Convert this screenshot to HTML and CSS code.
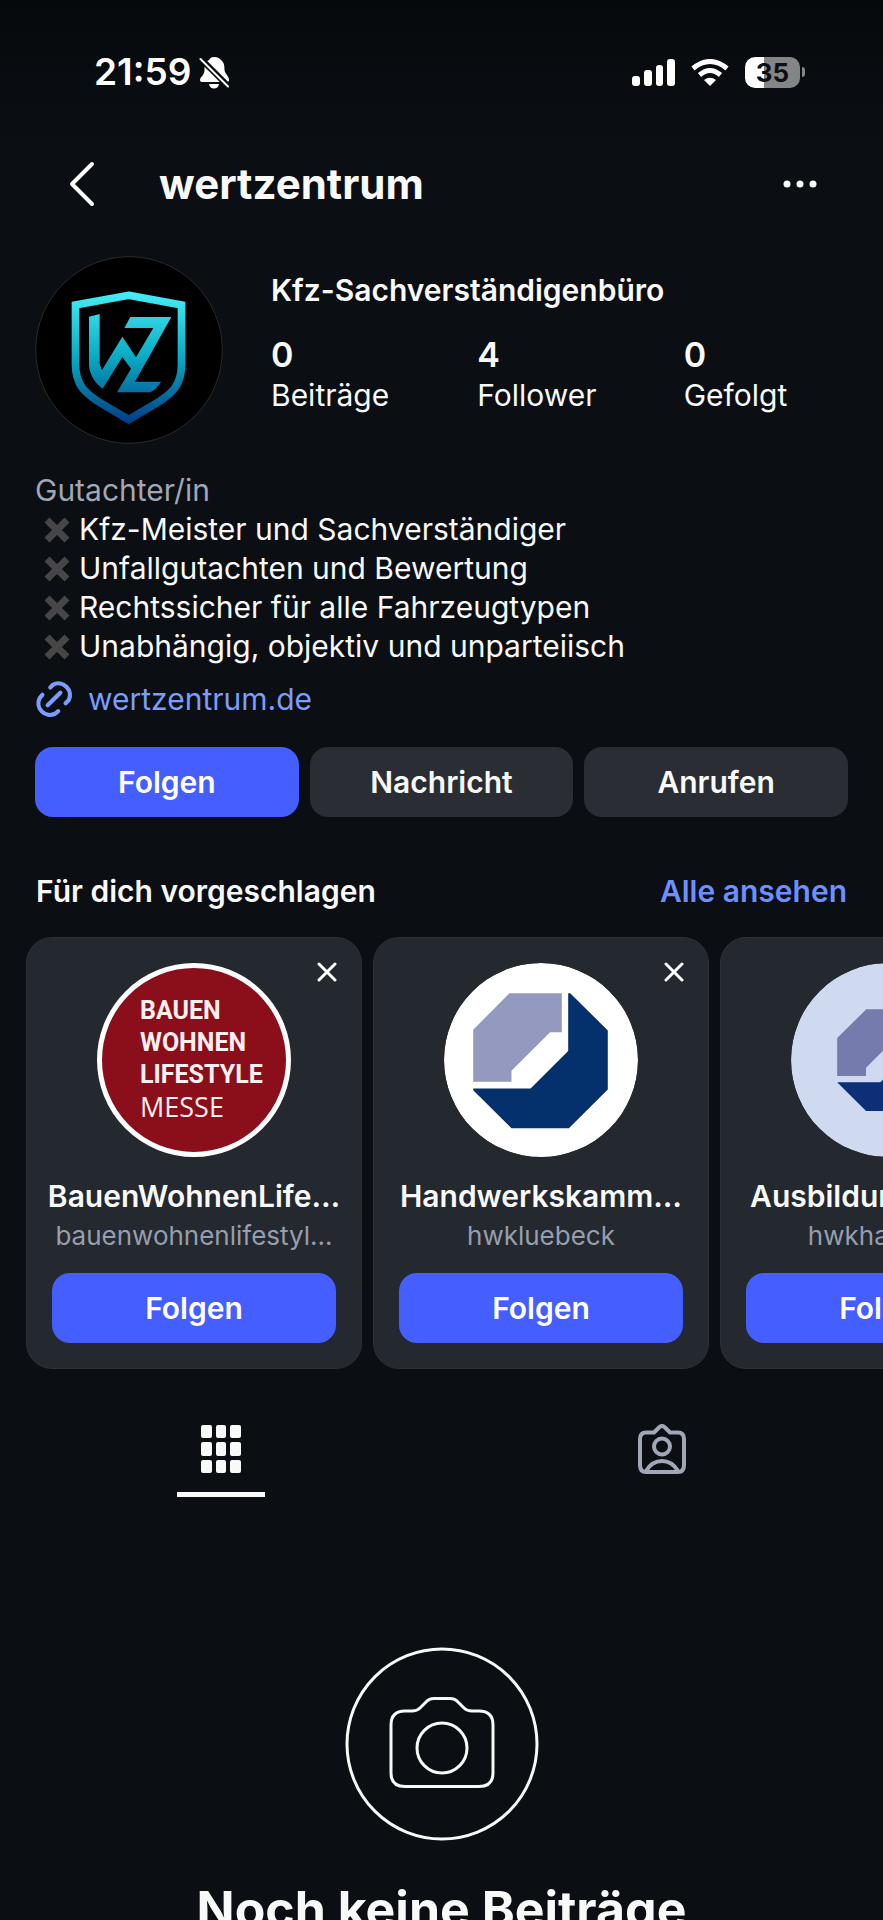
FILE: index.html
```html
<!DOCTYPE html>
<html lang="de">
<head>
  <meta charset="UTF-8">
  <meta name="viewport" content="width=device-width, initial-scale=1.0">
  <title>wertzentrum</title>
  <link rel="stylesheet" href="styles.css">
</head>
<body>
  <div class="app">
    <div class="status-bar">
      <div class="status-left">
        <span class="time">21:59</span>
        <svg class="bell" viewBox="0 0 30 33" width="30" height="33">
          <path d="M15 1C19 1 21 2.500 22 4C25 6.500 25.500 9 25.500 14C26 18 30 20 30 24C30 25.500 29 26 28 26H3C1 26 .500 24 1.500 22C4 19 5.500 18 5.500 13C5.500 8 7 5.500 10 4C11 2 12.500 1 15 1Z" fill="#fff"/>
          <path d="M10 28H20C19.500 31 17.500 32.500 15 32.500C12.500 32.500 10.500 31 10 28Z" fill="#fff"/>
          <path d="M0 1L30 31" stroke="#080b0f" stroke-width="6"/>
          <path d="M1.500 3L29 30.500" stroke="#fff" stroke-width="2" stroke-linecap="round"/>
        </svg>
      </div>
      <div class="status-right">
        <svg viewBox="0 0 43 27" width="43" height="27" fill="#fff">
          <rect x="0" y="17" width="8" height="10" rx="3"/>
          <rect x="12" y="11" width="8" height="16" rx="3"/>
          <rect x="24" y="6" width="7" height="21" rx="3"/>
          <rect x="35" y="0" width="8" height="27" rx="3"/>
        </svg>
        <svg viewBox="0 0 38 27" width="38" height="27" fill="none" stroke="#fff" stroke-width="5">
          <path d="M2 9.500Q19 -4.500 36 9.500"/>
          <path d="M8.500 16Q19 7 29.500 16"/>
          <path d="M19 27L13 21Q19 16.500 25 21Z" fill="#fff" stroke="none"/>
        </svg>
        <div class="battery"><span class="battery-level">35</span><span class="battery-tip"></span></div>
      </div>
    </div>

    <header class="header">
      <button class="icon-btn" aria-label="Zurück">
        <svg viewBox="0 0 26 46" width="26" height="46" fill="none" stroke="#f8f9f9" stroke-width="4" stroke-linecap="round" stroke-linejoin="round"><path d="M23 3L3 23L23 43"/></svg>
      </button>
      <h1>wertzentrum</h1>
      <button class="icon-btn" aria-label="Mehr">
        <svg viewBox="0 0 34 8" width="34" height="8" fill="#f8f9f9"><circle cx="4" cy="4" r="3.500"/><circle cx="17" cy="4" r="3.500"/><circle cx="30" cy="4" r="3.500"/></svg>
      </button>
    </header>

    <main>
      <section class="profile">
        <svg class="avatar" viewBox="0 0 564 564">
          <defs>
            <linearGradient id="wz" gradientUnits="userSpaceOnUse" x1="0" y1="106" x2="0" y2="504">
              <stop offset="0" stop-color="#46eef5"/>
              <stop offset=".5" stop-color="#0aa9c2"/>
              <stop offset="1" stop-color="#013b84"/>
            </linearGradient>
          </defs>
          <circle cx="282" cy="282" r="280" fill="#000" stroke="#2a2a2b" stroke-width="3"/>
          <path d="M281 118L439.500 147V325C439.500 390 408 412 375 435L281 491L187 435C154 412 121.500 390 121.500 325V147Z" fill="none" stroke="url(#wz)" stroke-width="23"/>
          <path d="M162 182L194 174V325L201 342L262 242L303 304L355 216H268L286 183H409L300 377H378Q362 403 345 409H246L288 338L262 303L203 398C175 378 162 350 162 325Z" fill="url(#wz)"/>
        </svg>
        <div class="info">
          <h2>Kfz-Sachverständigenbüro</h2>
          <div class="stats">
            <div><b>0</b><span>Beiträge</span></div>
            <div><b>4</b><span>Follower</span></div>
            <div><b>0</b><span>Gefolgt</span></div>
          </div>
        </div>
      </section>

      <section class="bio">
        <p class="category">Gutachter/in</p>
        <ul>
          <li><svg class="cross" viewBox="0 0 26 26"><path d="M3 3L23 23M23 3L3 23"/></svg>Kfz-Meister und Sachverständiger</li>
          <li><svg class="cross" viewBox="0 0 26 26"><path d="M3 3L23 23M23 3L3 23"/></svg>Unfallgutachten und Bewertung</li>
          <li><svg class="cross" viewBox="0 0 26 26"><path d="M3 3L23 23M23 3L3 23"/></svg>Rechtssicher für alle Fahrzeugtypen</li>
          <li><svg class="cross" viewBox="0 0 26 26"><path d="M3 3L23 23M23 3L3 23"/></svg>Unabhängig, objektiv und unparteiisch</li>
        </ul>
        <a class="website" href="#">
          <svg viewBox="1 1 36 36" width="38" height="38" fill="none" stroke="#7a9dff" stroke-width="4" stroke-linecap="round">
            <path d="M13 25L25 13"/>
            <path d="M15.500 8L18 5.500A11 11 0 0 1 33 20L30 23"/>
            <path d="M8 15L5.500 18A11 11 0 0 0 20 33L23 30.500"/>
          </svg>
          wertzentrum.de
        </a>
      </section>

      <div class="actions">
        <button class="btn primary">Folgen</button>
        <button class="btn">Nachricht</button>
        <button class="btn">Anrufen</button>
      </div>

      <div class="suggest-head">
        <h3>Für dich vorgeschlagen</h3>
        <a href="#">Alle ansehen</a>
      </div>

      <div class="cards">
        <article class="card">
          <button class="close" aria-label="Schließen"><svg viewBox="0 0 20 20" width="20" height="20"><path d="M2 2L18 18M18 2L2 18"/></svg></button>
          <div class="logo messe">
            <strong>BAUEN</strong>
            <strong>WOHNEN</strong>
            <strong>LIFESTYLE</strong>
            <span>MESSE</span>
          </div>
          <h4>BauenWohnenLife…</h4>
          <p>bauenwohnenlifestyl…</p>
          <button class="btn primary">Folgen</button>
        </article>
        <article class="card">
          <button class="close" aria-label="Schließen"><svg viewBox="0 0 20 20" width="20" height="20"><path d="M2 2L18 18M18 2L2 18"/></svg></button>
          <svg class="logo" viewBox="0 0 578 578">
            <circle cx="289" cy="289" r="289" fill="#fff"/>
            <path d="M195 90H351V206H316L201 321V354H87V199Z" fill="#9399bf"/>
            <path d="M370 90H376L488 201V377L372 492H201L87 379V374H258L370 262Z" fill="#04316b"/>
          </svg>
          <h4>Handwerkskamm…</h4>
          <p>hwkluebeck</p>
          <button class="btn primary">Folgen</button>
        </article>
        <article class="card">
          <button class="close" aria-label="Schließen"><svg viewBox="0 0 20 20" width="20" height="20"><path d="M2 2L18 18M18 2L2 18"/></svg></button>
          <svg class="logo" viewBox="0 0 578 578">
            <circle cx="289" cy="289" r="289" fill="#cfd9ef"/>
            <g transform="translate(72 70) scale(.754)">
              <path d="M202 90H351V206H316L201 321V354H87V204Z" fill="#757cad"/>
              <path d="M370 90L488 201V377L372 492H201L87 378H258L370 262Z" fill="#0c2f78"/>
            </g>
          </svg>
          <h4>Ausbildungsbera…</h4>
          <p>hwkhamburg</p>
          <button class="btn primary">Folgen</button>
        </article>
      </div>

      <nav class="tabs">
        <a class="tab active" href="#" aria-label="Beiträge">
          <svg viewBox="0 0 42 50" width="42" height="50" fill="#f8f9f9">
            <rect x="1" y="1" width="11" height="13" rx="2"/><rect x="16" y="1" width="10" height="13" rx="2"/><rect x="30" y="1" width="11" height="13" rx="2"/>
            <rect x="1" y="18" width="11" height="14" rx="2"/><rect x="16" y="18" width="10" height="14" rx="2"/><rect x="30" y="18" width="11" height="14" rx="2"/>
            <rect x="1" y="36" width="11" height="13" rx="2"/><rect x="16" y="36" width="10" height="13" rx="2"/><rect x="30" y="36" width="11" height="13" rx="2"/>
          </svg>
        </a>
        <a class="tab" href="#" aria-label="Markiert">
          <svg viewBox="0 0 50 50" width="50" height="50" fill="none" stroke="#a0a7b6" stroke-width="4" stroke-linejoin="round">
            <path d="M9 8.500H17L22.500 3Q25 1 27.500 3L33 8.500H41Q47 8.500 47 15V41Q47 48 41 48H9Q3 48 3 41V15Q3 8.500 9 8.500Z"/>
            <circle cx="25" cy="22.500" r="8"/>
            <path d="M9 47Q15 37 25 37Q35 37 41 47"/>
          </svg>
        </a>
      </nav>

      <section class="empty">
        <svg viewBox="0 0 194 194" width="194" height="194" fill="none" stroke="#f8f9f9" stroke-width="3" stroke-linejoin="round">
          <circle cx="97" cy="97" r="95"/>
          <path d="M60 64H67Q72 64 75 61L81 55Q84 51.500 89 51.500H105Q110 51.500 113 55L119 61Q122 64 127 64H134Q148 64 148 78V126Q148 139.500 134 139.500H60Q46 139.500 46 126V78Q46 64 60 64Z"/>
          <circle cx="97" cy="101" r="25"/>
        </svg>
        <h2>Noch keine Beiträge</h2>
      </section>
    </main>
  </div>
</body>
</html>
```

FILE: styles.css
```css
*{
  box-sizing: border-box;
  margin: 0;
  padding: 0;
}
body{
  background-color: #0b0e13;
  color: #f8f9f9;
  font-family: Inter, "Liberation Sans", sans-serif;
  font-size: 30px;
  line-height: 40px;
}
a{
  text-decoration: none;
}
button{
  border: none;
  background: none;
  color: inherit;
  font-family: inherit;
  cursor: pointer;
}
svg{
  display: block;
  flex-shrink: 0;
}
.app{
  height: 100vh;
  overflow: hidden;
  background: linear-gradient(#06090c, #0b0e13 150px);
}

/* status bar */
.status-bar{
  display: flex;
  justify-content: space-between;
  padding: 50px 78px 0 94px;
  color: #fff;
}
.status-left, .status-right{
  display: flex;
  align-items: center;
  height: 44px;
}
.status-left{
  gap: 8px;
}
.status-right{
  gap: 16px;
}
.time{
  font-size: 37px;
  font-weight: 600;
}
.battery{
  display: flex;
  align-items: center;
  gap: 2px;
}
.battery-level{
  width: 55px;
  height: 31px;
  border-radius: 10px;
  background: linear-gradient(90deg, #fff 35%, #848587 35%);
  color: #0b0e13;
  font-size: 26px;
  font-weight: 700;
  line-height: 31px;
  text-align: center;
}
.battery-tip{
  width: 3px;
  height: 10px;
  border-radius: 0 3px 3px 0;
  background-color: #848587;
}

/* header */
.header{
  display: flex;
  align-items: center;
  padding: 46px 66px 0 69px;
  height: 134px;
  margin-bottom: 28px;
}
.header h1{
  flex: 1;
  margin-left: 64px;
  font-size: 42px;
  line-height: 56px;
}

/* profile */
.profile{
  display: flex;
  gap: 48px;
  padding: 0 35px;
}
.avatar{
  width: 188px;
  height: 188px;
}
.info{
  flex: 1;
  padding-top: 14px;
}
.info h2{
  font-size: 30px;
  font-weight: 600;
  margin-bottom: 25px;
}
.stats{
  display: grid;
  grid-template-columns: repeat(3, 1fr);
  gap: 42px;
}
.stats b{
  display: block;
  font-size: 34px;
  font-weight: 600;
}

/* bio */
.bio{
  padding: 26px 35px 0;
}
.category{
  color: #a0a7b6;
}
.bio ul{
  list-style: none;
}
.bio li{
  display: flex;
  align-items: center;
  gap: 9px;
  padding-left: 9px;
  line-height: 39px;
}
.cross{
  width: 26px;
  height: 26px;
  fill: none;
  stroke: #464646;
  stroke-width: 7;
}
.website{
  display: flex;
  align-items: center;
  gap: 15px;
  margin-top: 13px;
  color: #7a9dff;
}

/* buttons */
.btn{
  height: 70px;
  border-radius: 18px;
  background-color: #2a2d34;
  font-size: 30px;
  font-weight: 600;
}
.primary{
  background-color: #455eff;
  color: #fff;
}
.actions{
  display: grid;
  grid-template-columns: repeat(3, 1fr);
  gap: 11px;
  padding: 28px 35px 0;
}

/* suggestions */
.suggest-head{
  display: flex;
  justify-content: space-between;
  padding: 54px 36px 26px;
  font-weight: 600;
}
.suggest-head h3{
  font-size: 30px;
  font-weight: 600;
}
.suggest-head a{
  color: #6c90ff;
}
.cards{
  display: flex;
  gap: 11px;
  padding-left: 26px;
  overflow: hidden;
}
.card{
  position: relative;
  flex: 0 0 336px;
  min-width: 0;
  display: flex;
  flex-direction: column;
  align-items: center;
  padding: 25px;
  border: 1px solid #2d3137;
  border-radius: 26px;
  background-color: #24282f;
}
.close{
  position: absolute;
  top: 24px;
  right: 24px;
}
.close svg{
  fill: none;
  stroke: #fff;
  stroke-width: 3;
  stroke-linecap: round;
}
.logo{
  width: 194px;
  height: 194px;
  border-radius: 50%;
}
.messe{
  display: flex;
  flex-direction: column;
  padding: 27px 0 0 38px;
  border: 5px solid #fff;
  background-color: #8a0f1b;
  color: #fbeff0;
}
.messe strong{
  font-family: Roboto, "Liberation Sans", sans-serif;
  font-size: 25px;
  line-height: 32px;
}
.messe span{
  font-family: "Open Sans", sans-serif;
  font-size: 27px;
  line-height: 32px;
}
.card h4{
  margin-top: 19px;
  font-size: 30px;
  font-weight: 600;
  white-space: nowrap;
}
.card p{
  margin: 2px 0 19px;
  color: #979eae;
  font-size: 26px;
  line-height: 36px;
}
.card .btn{
  width: 100%;
}

/* tabs */
.tabs{
  display: flex;
  margin-top: 55px;
}
.tab{
  flex: 1;
  display: flex;
  flex-direction: column;
  align-items: center;
}
.active::after{
  content: "";
  width: 88px;
  height: 5px;
  margin-top: 18px;
  background-color: #f8f9f9;
}

/* no posts yet */
.empty{
  display: flex;
  flex-direction: column;
  align-items: center;
  padding-top: 150px;
}
.empty h2{
  margin-top: 36px;
  font-size: 50px;
  line-height: 64px;
}
```
